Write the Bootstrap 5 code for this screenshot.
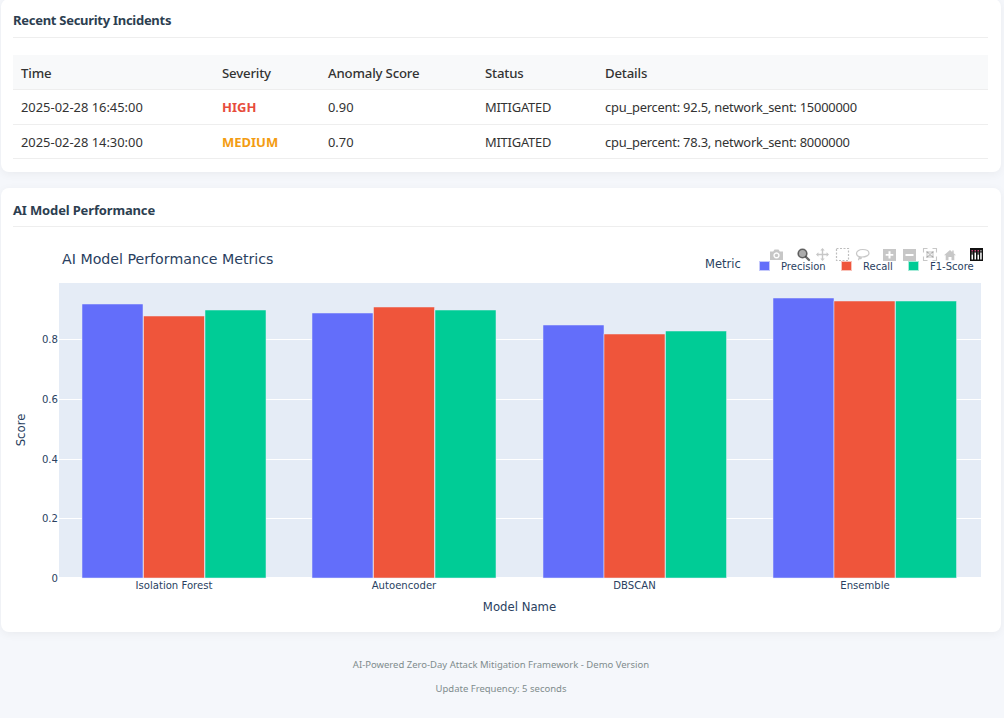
<!DOCTYPE html>
<html lang="en">
<head>
<meta charset="utf-8">
<title>AI Model Performance</title>
<link rel="stylesheet" href="https://cdn.jsdelivr.net/npm/bootstrap@5.3.0/dist/css/bootstrap.min.css">
<style>
html,body{height:718px;overflow:hidden}
body{background:#f5f7fb;font-family:"Noto Sans","Open Sans",sans-serif;color:#333}
.shell{margin:-1px 3px 0 1px}
.panel{background:#fff;border:0;border-radius:8px;box-shadow:0 2px 10px rgba(0,0,0,.05);padding:12px 13px 12px 12px;margin-bottom:16px}
.panel-head{height:27px;margin:0;border-bottom:1px solid #eee;font-size:13px;font-weight:700;color:#2c3e50;line-height:18px;letter-spacing:-.28px}
.panel-head-second{padding-top:1px;letter-spacing:-.15px}
.incident-table{margin:17px 0 1px;font-size:12.9px;color:#333;--bs-table-color:#333}
.incident-table th,.incident-table td{padding:1px 8px 0;height:34.6px;vertical-align:middle;border-color:#eee}
.incident-table tbody tr:last-child td{padding-top:2px}
.incident-table th{background:#f8f9fa;font-weight:500;font-size:13.2px;letter-spacing:-.17px;color:#333;padding-top:3px}
.txt-tight{letter-spacing:-.22px}
.sev-high{color:#e74c3c;font-weight:700;font-size:13px}
.sev-med{color:#f39c12;font-weight:700;font-size:13px}
.chart-svg{display:block}
.chart-svg text{font-family:"DejaVu Sans",Verdana,sans-serif;fill:#2a3f5f}
.tick{font-size:10.1px}
.axis{font-size:11.7px}
.legend-head{font-size:11.5px}
.legend-t{font-size:10px}
.fade-ic{fill:#444;fill-opacity:.3}
.page-foot{font-size:9.5px;color:#7f8c8d;text-align:center;margin:0;padding-top:5px;line-height:24px}
.page-foot p{margin:0}
</style>
</head>
<body>
<div class="shell">
  <section class="card panel">
    <h5 class="panel-head">Recent Security Incidents</h5>
    <table class="table incident-table">
      <thead>
        <tr><th style="width:201px">Time</th><th style="width:106px">Severity</th><th style="width:157px">Anomaly Score</th><th style="width:120px">Status</th><th>Details</th></tr>
      </thead>
      <tbody>
        <tr><td>2025-02-28 16:45:00</td><td><span class="sev-high">HIGH</span></td><td>0.90</td><td class="txt-tight">MITIGATED</td><td class="txt-tight">cpu_percent: 92.5, network_sent: 15000000</td></tr>
        <tr><td>2025-02-28 14:30:00</td><td><span class="sev-med">MEDIUM</span></td><td>0.70</td><td class="txt-tight">MITIGATED</td><td class="txt-tight">cpu_percent: 78.3, network_sent: 8000000</td></tr>
      </tbody>
    </table>
  </section>
  <section class="card panel">
    <h5 class="panel-head panel-head-second">AI Model Performance</h5>
    <svg class="chart-svg" width="975" height="393" viewBox="13 227 975 393" overflow="visible" role="img" aria-label="AI Model Performance Metrics">
      <rect x="59" y="283" width="922" height="294" fill="#e5ecf6"/>
      <g stroke="#fff" stroke-width="1">
        <line x1="59" x2="981" y1="339.5" y2="339.5"/>
        <line x1="59" x2="981" y1="399.5" y2="399.5"/>
        <line x1="59" x2="981" y1="459.5" y2="459.5"/>
        <line x1="59" x2="981" y1="518.5" y2="518.5"/>
      </g>
      <g stroke="#e5ecf6" stroke-width=".5">
        <g fill="#636efa">
          <rect x="82" y="304" width="61" height="274"/>
          <rect x="312" y="313" width="61" height="265"/>
          <rect x="543" y="325" width="61" height="253"/>
          <rect x="773" y="298" width="61" height="280"/>
        </g>
        <g fill="#ef553b">
          <rect x="143.500" y="316" width="61" height="262"/>
          <rect x="373.500" y="307" width="61" height="271"/>
          <rect x="604" y="334" width="61" height="244"/>
          <rect x="834" y="301" width="61" height="277"/>
        </g>
        <g fill="#00cc96">
          <rect x="205" y="310" width="61" height="268"/>
          <rect x="435" y="310" width="61" height="268"/>
          <rect x="665.500" y="331" width="61" height="247"/>
          <rect x="895.500" y="301" width="61" height="277"/>
        </g>
      </g>
      <text x="62" y="263.500" font-size="14.200">AI Model Performance Metrics</text>
      <g class="tick" text-anchor="end">
        <text x="58" y="343">0.8</text>
        <text x="58" y="403">0.6</text>
        <text x="58" y="463">0.4</text>
        <text x="58" y="522">0.2</text>
        <text x="58" y="582">0</text>
      </g>
      <g class="tick" text-anchor="middle">
        <text x="174" y="589">Isolation Forest</text>
        <text x="404" y="589">Autoencoder</text>
        <text x="634.500" y="589">DBSCAN</text>
        <text x="865" y="589">Ensemble</text>
      </g>
      <text class="axis" x="519.500" y="611" text-anchor="middle">Model Name</text>
      <text class="axis" transform="translate(25 430) rotate(-90)" text-anchor="middle">Score</text>

      <text class="legend-head" x="705" y="267.500">Metric</text>
      <g stroke-width="1">
        <rect x="759.500" y="261.500" width="10" height="9" fill="#636efa" stroke="#c5c9fb"/>
        <rect x="841.500" y="261.500" width="10" height="9" fill="#ef553b" stroke="#f9c3ba"/>
        <rect x="908.500" y="261.500" width="10" height="9" fill="#00cc96" stroke="#a8ebd9"/>
      </g>
      <g class="legend-t">
        <text x="781" y="269.500">Precision</text>
        <text x="863" y="269.500">Recall</text>
        <text x="930" y="269.500">F1-Score</text>
      </g>

      <!-- modebar -->
      <g class="fade-ic">
        <path fill-rule="evenodd" d="M770 251.500h3.200l1.300-2h4l1.300 2h3.200v8.500h-13zM776.500 252.300a3.100 3.100 0 1 0 .01 0zM776.500 253.700a1.700 1.700 0 1 1 -.01 0z"/>
        <path d="M822.500 248l2.200 2.400h-1.500v3.400h3.400v-1.500l2.400 2.200-2.400 2.200v-1.500h-3.400v3.400h1.500l-2.200 2.400-2.200-2.400h1.500v-3.400h-3.400v1.500l-2.400-2.200 2.400-2.200v1.500h3.400v-3.400h-1.500z"/>
        <path fill-rule="evenodd" d="M883 249h13v12h-13zM888.500 251.200v2.800h-2.800v1.800h2.800v2.800h2v-2.800h2.800v-1.800h-2.800v-2.800z"/>
        <path fill-rule="evenodd" d="M903 249h13v12h-13zM905.500 254v2h8v-2z"/>
        <path d="M950 250l2.200 1.900v-1.400h1.500v2.700l2.300 2h-1.700v5h-2.800v-3.300h-3v3.300h-2.800v-5h-1.700z"/>
      </g>
      <circle cx="802.500" cy="253.500" r="4.300" fill="#444" fill-opacity=".45" stroke="#444" stroke-opacity=".8" stroke-width="1.600"/>
      <path stroke="#444" stroke-opacity=".8" stroke-width="2.400" stroke-linecap="round" d="M806 257l3 3"/>
      <rect x="836.500" y="248.500" width="12" height="12" fill="none" stroke="#444" stroke-opacity=".35" stroke-width="1.200" stroke-dasharray="2 1.500"/>
      <path fill="none" stroke="#444" stroke-opacity=".3" stroke-width="1.200" d="M862.500 249.500c4 0 6.500 1.600 6.500 3.700s-3 3.800-7 3.800-5.500-1.800-5.500-3.700 2.500-3.800 6-3.800zM859.500 256.500c-1 1.300 0 2.200 1 2.200s1-1.100 0-1.400-1.800 1.200-2 2.900"/>
      <g fill="none" stroke="#444" stroke-opacity=".3" stroke-width="1.100">
        <path d="M923.500 252.500v-4h4M932.500 248.500h4v4M936.500 256.500v4h-4M927.500 260.500h-4v-4"/>
        <path d="M926.500 251.500l7 6M933.500 251.500l-7 6"/>
        <rect x="927" y="252" width="6" height="5"/>
      </g>
      <rect x="970" y="248" width="13" height="13" fill="#111"/>
      <g fill="#fff">
        <rect x="971.500" y="254.500" width="1.500" height="5"/>
        <rect x="974.500" y="252.500" width="1.500" height="7"/>
        <rect x="977.500" y="254.500" width="1.500" height="5"/>
        <rect x="980.200" y="252.500" width="1.500" height="7"/>
      </g>
      <g>
        <rect x="971.500" y="250" width="1.500" height="1.500" fill="#c9447a"/>
        <rect x="974.500" y="250" width="1.500" height="1.500" fill="#c9447a"/>
        <rect x="977.500" y="250" width="1.500" height="1.500" fill="#c9447a"/>
        <rect x="980.200" y="250" width="1.500" height="1.500" fill="#999"/>
        <rect x="971.500" y="252.500" width="1.500" height="1" fill="#999"/>
        <rect x="977.500" y="252.500" width="1.500" height="1" fill="#999"/>
      </g>
    </svg>
  </section>
  <footer class="page-foot">
    <p>AI-Powered Zero-Day Attack Mitigation Framework - Demo Version</p>
    <p>Update Frequency: 5 seconds</p>
  </footer>
</div>
<script src="https://cdn.jsdelivr.net/npm/bootstrap@5.3.0/dist/js/bootstrap.bundle.min.js"></script>
</body>
</html>
